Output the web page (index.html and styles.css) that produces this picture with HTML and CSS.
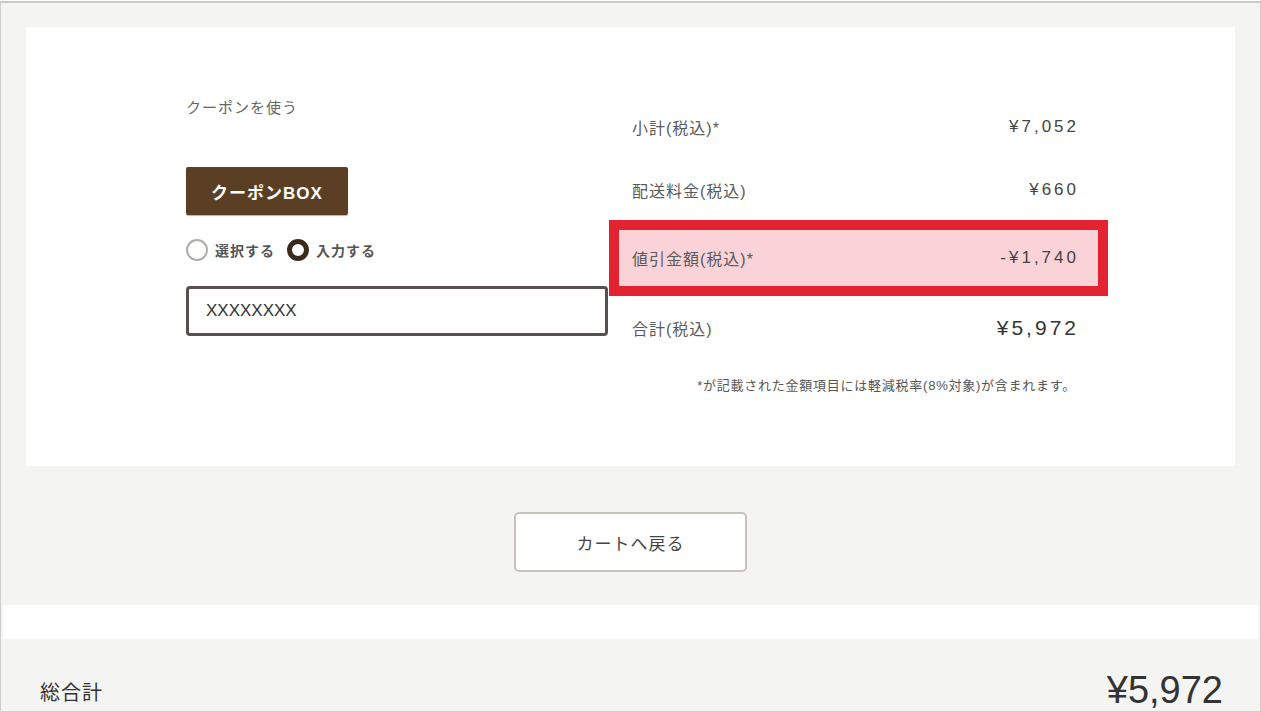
FILE: index.html
```html
<!DOCTYPE html>
<html lang="ja">
  <head>
    <meta charset="UTF-8" />
    <meta name="viewport" content="width=device-width, initial-scale=1.0" />
    <title>ご注文内容の確認</title>
    <link rel="stylesheet" href="styles.css">
  </head>
  <body>
    <div class="frame">
      <div class="card">
        <!-- coupon input -->
        <div class="coupon">
          <p class="coupon-label">クーポンを使う</p>
          <button class="coupon-box">クーポンBOX</button>
          <div class="radios">
            <label class="radio"><span class="dot"></span>選択する</label>
            <label class="radio checked"><span class="dot"></span>入力する</label>
          </div>
          <div class="code-input">XXXXXXXX</div>
        </div>

        <!-- price summary -->
        <div class="summary">
          <div class="row first">
            <span>小計(税込)*</span>
            <span class="price">¥7,052</span>
          </div>
          <div class="row second">
            <span>配送料金(税込)</span>
            <span class="price">¥660</span>
          </div>
          <div class="row discount">
            <span>値引金額(税込)*</span>
            <span class="price">-¥1,740</span>
          </div>
          <div class="row total">
            <span>合計(税込)</span>
            <span class="price big">¥5,972</span>
          </div>
          <p class="note">*が記載された金額項目には軽減税率(8%対象)が含まれます。</p>
        </div>
      </div>

      <div class="back-wrap">
        <button class="back-btn">カートへ戻る</button>
      </div>

      <div class="strip"></div>

      <div class="grand">
        <span class="grand-label">総合計</span>
        <span class="grand-price">¥5,972</span>
      </div>
    </div>
  </body>
</html>
```

FILE: styles.css
```css
* {
  box-sizing: border-box;
}
body {
  margin: 0;
  padding-top: 1px;
  background-color: #fff;
  font-family: "Liberation Sans", "Noto Sans CJK JP", sans-serif;
  color: #555;
}
p {
  margin: 0;
}
button {
  font-family: inherit;
  cursor: pointer;
}
.frame {
  height: 711px;
  background-color: #f4f4f2;
  border: 1px solid #cfcfcd;
  border-top: 2px solid #c9c9c7;
  display: flex;
  flex-direction: column;
}
.card {
  margin: 24px 25px 0 25px;
  height: 439px;
  background-color: #fff;
  display: flex;
  gap: 1px;
  padding-left: 160px;
}

/* left column */
.coupon {
  width: 422px;
  padding-top: 71px;
  display: flex;
  flex-direction: column;
  align-items: flex-start;
}
.coupon-label {
  font-size: 15px;
  line-height: 20px;
  letter-spacing: 1px;
  color: #666;
}
.coupon-box {
  margin-top: 49px;
  width: 162px;
  height: 48px;
  background-color: #5b3f24;
  color: #fff;
  border: none;
  border-radius: 2px;
  font-size: 17px;
  font-weight: bold;
  letter-spacing: 1px;
  box-shadow: 0 1px 1px rgba(0, 0, 0, 0.3);
}
.radios {
  margin-top: 23px;
  height: 24px;
  display: flex;
  align-items: center;
  gap: 12px;
}
.radio {
  display: flex;
  align-items: center;
  gap: 7px;
  font-size: 14px;
  font-weight: bold;
  letter-spacing: 1px;
  color: #555;
}
.dot {
  width: 22px;
  height: 22px;
  border-radius: 50%;
  border: 2px solid #b0aca8;
  background-color: #fff;
}
.radio.checked .dot {
  border: 5px solid #3a2a1e;
}
.code-input {
  margin-top: 24px;
  width: 422px;
  height: 50px;
  border: 3px solid #57504c;
  border-radius: 4px;
  padding-left: 17px;
  display: flex;
  align-items: center;
  font-size: 17px;
  color: #333;
}

/* right column */
.summary {
  width: 499px;
  padding-top: 67px;
}
.row {
  display: flex;
  justify-content: space-between;
  align-items: center;
  padding: 0 32px 0 23px;
  font-size: 16px;
  letter-spacing: 1px;
  color: #5a5a5a;
}
.row.first {
  height: 66px;
}
.row.second {
  height: 60px;
}
.row.discount {
  height: 76px;
  border: 10px solid #e3232f;
  background-color: #f9d3d7;
  padding: 0 22px 0 13px;
}
.row.total {
  height: 64px;
}
.price {
  font-size: 17px;
  letter-spacing: 3px;
  margin-right: -3px;
  color: #444;
}
.price.big {
  font-size: 21px;
  color: #333;
}
.note {
  margin-top: 18px;
  padding-right: 32px;
  text-align: right;
  font-size: 13px;
  line-height: 16px;
  letter-spacing: 0.75px;
  color: #555;
}

/* back button */
.back-wrap {
  margin-top: 46px;
  display: flex;
  justify-content: center;
}
.back-btn {
  width: 233px;
  height: 60px;
  background-color: #fff;
  border: 2px solid #c9c2ba;
  border-radius: 5px;
  font-size: 17px;
  letter-spacing: 1px;
  color: #444;
}
.strip {
  margin: 33px 2px 0 2px;
  height: 34px;
  background-color: #fff;
}
.grand {
  flex: 1;
  display: flex;
  justify-content: space-between;
  align-items: flex-end;
  padding: 0 37px 6px 39px;
  color: #333;
}
.grand-label {
  font-size: 20px;
  line-height: 24px;
  letter-spacing: 1px;
}
.grand-price {
  font-size: 38px;
  line-height: 30px;
}
```
